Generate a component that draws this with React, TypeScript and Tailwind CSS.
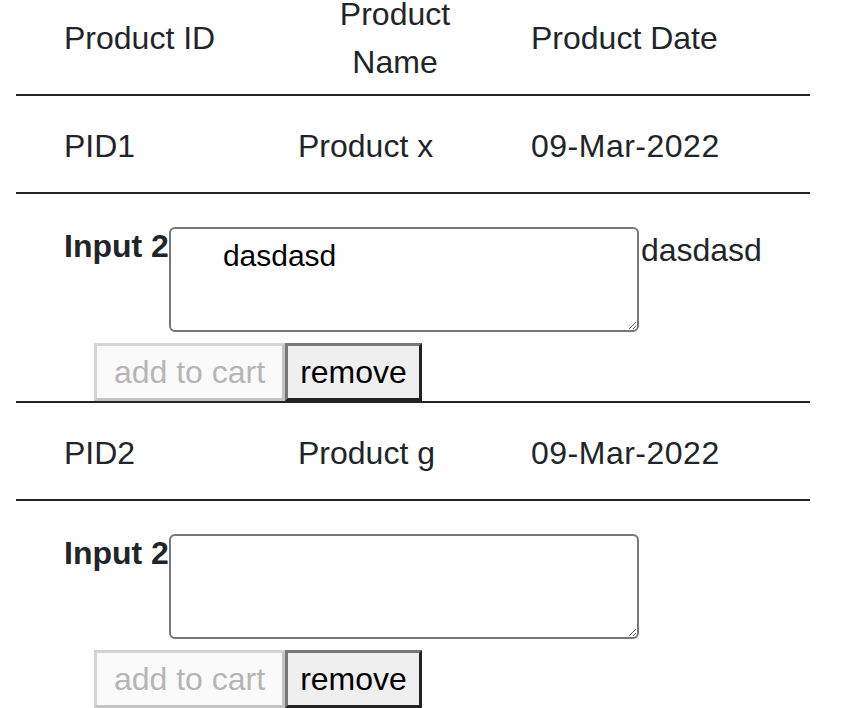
import React from 'react';

interface Product {
  id: string;
  name: string;
  date: string;
  note: string;
}

const products: Product[] = [
  { id: 'PID1', name: 'Product x', date: '09-Mar-2022', note: 'dasdasd' },
  { id: 'PID2', name: 'Product g', date: '09-Mar-2022', note: '' },
];

const ProductRow: React.FC<{ product: Product }> = ({ product }) => (
  <>
    <div className="flex border-b-2 border-[#212529] pt-[26px] pb-[22px]">
      <div className="w-[282px] pl-12">{product.id}</div>
      <div className="w-[233px]">{product.name}</div>
      <div className="tracking-[0.5px]">{product.date}</div>
    </div>
    <div className="flex flex-col border-b-2 border-[#212529] pl-12 pt-7">
      <div className="flex items-start">
        <label className="font-bold">Input 2</label>
        <textarea
          readOnly
          value={product.note}
          className="mt-[5px] h-[105px] w-[470px] rounded-md border-2 border-[#767676] bg-white pt-[3px] pl-[52px] text-[30px] leading-[48px] text-black outline-none"
        />
        <span className="ml-[2px] mt-[4px]">{product.note}</span>
      </div>
      <div className="mt-[11px] flex pl-[30px]">
        <button
          disabled
          className="flex h-[58px] w-[191px] items-center justify-center border-[3px] border-t-[#d4d4d4] border-l-[#d4d4d4] border-b-[#c4c4c4] border-r-[#c4c4c4] bg-[#fafafa] text-[32px] text-[#b5b5b5]"
        >
          add to cart
        </button>
        <button className="flex h-[58px] w-[137px] items-center justify-center border-[3px] border-t-[#777777] border-l-[#777777] border-b-[#222222] border-r-[#222222] bg-[#efefef] text-[32px] text-black">
          remove
        </button>
      </div>
    </div>
  </>
);

export default function App() {
  return (
    <div className="h-[708px] w-[864px] overflow-hidden bg-white font-['Liberation_Sans',Arial,sans-serif] text-[32px] leading-[48px] text-[#212529]">
      <div className="ml-4 -mt-[18px] w-[794px]">
        <div className="flex items-center border-b-2 border-[#212529] py-2">
          <div className="w-[282px] pl-12">Product ID</div>
          <div className="w-[233px]">
            <div className="w-[194px] text-center">
              Product
              <br />
              Name
            </div>
          </div>
          <div>Product Date</div>
        </div>
        {products.map(p => (
          <ProductRow key={p.id} product={p} />
        ))}
      </div>
    </div>
  );
}
